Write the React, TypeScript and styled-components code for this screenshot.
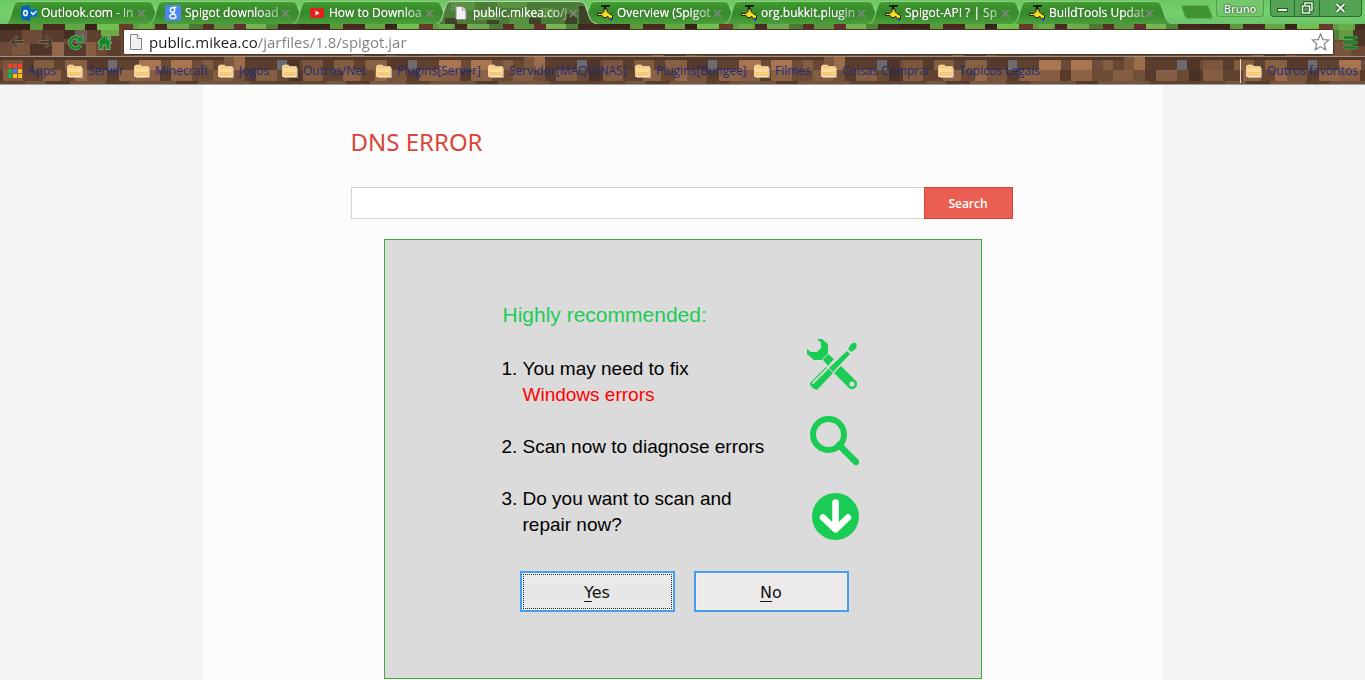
import React from "react";
import styled, { createGlobalStyle } from "styled-components";

const uiFont = '"Open Sans", "Noto Sans", sans-serif';

const GlobalStyle = createGlobalStyle`
  *, *::before, *::after { box-sizing: border-box; }
  body { margin: 0; font-family: ${uiFont}; background: #f2f2f2; }
  button, input { font-family: inherit; margin: 0; }
  a { color: inherit; text-decoration: none; }
`;

const Window = styled.div`
  display: flex;
  flex-direction: column;
  min-height: 100vh;
`;

const Chrome = styled.header`
  display: flex;
  flex-direction: column;
  overflow: hidden;
`;

const TitleBar = styled.div`
  display: flex;
  align-items: flex-start;
  height: 24px;
  padding-left: 5px;
  background: linear-gradient(#6cc765, #74d06e 50%, #6cc46a);
`;

const TabStrip = styled.nav`
  display: flex;
  align-items: center;
  flex: 1;
  min-width: 0;
`;

const Tab = styled.div<{ $active?: boolean }>`
  position: relative;
  z-index: ${(p) => (p.$active ? 1 : 0)};
  display: flex;
  align-items: center;
  flex: 0 0 160px;
  min-width: 0;
  height: 24px;
  margin-right: -16px;
  padding: 2px 8px 0 16px;
`;

const TabShape = styled.svg`
  position: absolute;
  inset: 0;
  width: 100%;
  height: 100%;
`;

const TabIcon = styled.span`
  position: relative;
  display: flex;
  flex: 0 0 16px;
  margin-right: 4px;
`;

const TabTitle = styled.a`
  position: relative;
  flex: 0 0 99px;
  min-width: 0;
  white-space: nowrap;
  font-size: 12px;
  font-weight: 400;
  line-height: 18px;
  color: #fff;
  text-shadow: 0 0 1px rgba(255, 255, 255, 0.8), 0 0 2px #1d4f10;
  mask-image: linear-gradient(90deg, #000 72px, rgba(0, 0, 0, 0.3) 99px);
`;

const CloseButton = styled.button`
  position: relative;
  display: flex;
  margin-left: -4px;
  padding: 1px;
  border: 0;
  background: none;
`;

const NewTab = styled.button`
  width: 28px;
  height: 14px;
  margin-left: 26px;
  border: 1px solid #5fae50;
  border-radius: 3px;
  background: #3f9430;
  transform: skewX(20deg);
`;

const WindowButtons = styled.div`
  display: flex;
  height: 17px;
  margin-right: 3px;
`;

const UserButton = styled.button`
  width: 48px;
  height: 17px;
  margin-right: 6px;
  padding: 1px 0 0;
  border: 1px solid #4f9f48;
  border-top: 0;
  border-radius: 0 0 4px 4px;
  background: #72c86b;
  font-size: 11px;
  font-weight: 600;
  line-height: 15px;
  color: #fff;
  text-shadow: 0 0 2px #173d12, 0 0 1px #173d12;
`;

const ControlButton = styled.button<{ $width: number }>`
  display: flex;
  align-items: center;
  justify-content: center;
  width: ${(p) => p.$width}px;
  padding: 0;
  border: 1px solid #2c6c2c;
  border-top: 0;
  border-left-width: 0;
  background: #55a455;
  &:first-of-type { border-left-width: 1px; border-bottom-left-radius: 4px; }
  &:last-of-type { border-bottom-right-radius: 4px; }
`;

const Bars = styled.div`
  position: relative;
  display: flex;
  flex-direction: column;
  background: #6b4935;
  border-bottom: 1px solid #a0a0a0;
`;

const DirtArt = styled.svg`
  position: absolute;
  inset: 0;
  width: 100%;
  height: 100%;
`;

const Toolbar = styled.div`
  position: relative;
  display: flex;
  align-items: center;
  height: 33px;
  padding: 5px 6px 1px 2px;
  border-bottom: 1px solid #a58f80;
`;

const ToolButton = styled.button`
  display: flex;
  align-items: center;
  justify-content: center;
  flex: 0 0 auto;
  width: 29px;
  height: 24px;
  padding: 0 0 0 1px;
  border: 0;
  background: none;
`;

const AddressBar = styled.form`
  display: flex;
  align-items: center;
  flex: 1;
  height: 26px;
  margin-left: 5px;
  padding: 0 3px 0 6px;
  border: 1px solid #4d3526;
  border-radius: 2px;
  background: #fff;
`;

const AddressInput = styled.input`
  flex: 1;
  min-width: 0;
  height: 22px;
  padding: 0;
  margin-left: 7px;
  border: 0;
  outline: 0;
  font-family: ${uiFont};
  font-size: 15px;
  -webkit-text-fill-color: transparent;
  background: linear-gradient(90deg, #1b1b1b 109px, #7d7d7d 109px);
  -webkit-background-clip: text;
  background-clip: text;
`;

const MenuButton = styled(ToolButton)`
  width: 18px;
  margin-left: 7px;
`;

const BookmarkBar = styled.nav`
  position: relative;
  display: flex;
  align-items: center;
  height: 27px;
  padding: 0 7px;
`;

const Bookmark = styled.a<{ $width?: number }>`
  display: flex;
  align-items: center;
  gap: 5px;
  flex: 0 0 auto;
  width: ${(p) => (p.$width ? `${p.$width}px` : "auto")};
  white-space: nowrap;
  font-size: 12px;
  line-height: 16px;
  color: #1b2c78;
  svg { flex: 0 0 16px; }
`;

const OtherBookmarks = styled.div`
  display: flex;
  align-items: center;
  height: 24px;
  margin-left: auto;
  padding-left: 5px;
  border-left: 1px solid #e4dcd6;
`;

const Page = styled.main`
  display: flex;
  justify-content: center;
  flex: 1;
  background:
    repeating-linear-gradient(45deg, rgba(255, 255, 255, 0.15) 0 1px, transparent 1px 4px),
    #f3f3f3;
`;

const Column = styled.div`
  width: 100%;
  max-width: 960px;
  padding: 41px 150px 1px 148px;
  background: #fcfcfc;
`;

const Heading = styled.h1`
  margin: 0 0 29px;
  font-family: "Noto Sans", sans-serif;
  font-size: 24px;
  font-weight: 400;
  line-height: 32px;
  color: #d9453a;
`;

const SearchForm = styled.form`
  display: flex;
  height: 32px;
`;

const SearchInput = styled.input`
  flex: 1;
  min-width: 0;
  padding: 0 8px;
  border: 1px solid #d6d6d6;
  border-right: 0;
  outline: 0;
  background: #fff;
  font-size: 14px;
`;

const SearchButton = styled.button`
  width: 89px;
  border: 1px solid #d9453a;
  background: #eb5f52;
  color: #fff;
  font-size: 12px;
  font-weight: 600;
`;

const Panel = styled.section`
  margin: 20px 31px 0 33px;
  padding: 61px 0 66px 118px;
  border: 1px solid #3bae3b;
  background: #dbdbdb;
  font-family: "Liberation Sans", sans-serif;
  color: #000;
`;

const PanelTitle = styled.h2`
  margin: 0 0 10px;
  font-size: 21px;
  font-weight: 400;
  line-height: 28px;
  color: #1bcc54;
`;

const PanelBody = styled.div`
  display: flex;
`;

const Steps = styled.ol`
  display: flex;
  flex-direction: column;
  gap: 26px;
  width: 304px;
  height: 206px;
  margin: 0;
  padding: 17px 40px 0 20px;
  font-size: 19px;
  line-height: 26px;
`;

const Alert = styled.span`
  display: block;
  color: #f00;
`;

const StepIcons = styled.div`
  display: flex;
  flex-direction: column;
  gap: 25px;
`;

const Actions = styled.div`
  display: flex;
  gap: 19px;
  margin: 26px 0 0 17px;
`;

const ActionButton = styled.button<{ $focused?: boolean }>`
  width: 155px;
  height: 41px;
  padding: 2px 0 0;
  border: 2px solid #449df0;
  background: ${(p) => (p.$focused ? "linear-gradient(#ededed, #e6e6e6 50%, #ececec)" : "#eceaea")};
  box-shadow: inset 0 0 0 1px ${(p) => (p.$focused ? "#f8f8f8" : "#fbeee4")};
  outline: ${(p) => (p.$focused ? "1px dotted #222" : "0")};
  outline-offset: -4px;
  font-family: "DejaVu Sans", sans-serif;
  font-size: 16px;
  color: #111;
`;

const Key = styled.span`
  text-decoration: underline;
  text-decoration-thickness: 1px;
  text-underline-offset: 3px;
`;

type Block = [number, number, number, number, string];

const dirtBlocks: Block[] = [
  [0, 0, 30, 6, "#3a2419"], [30, 0, 13, 6, "#5a9a3c"], [43, 0, 22, 6, "#4a2a20"], [65, 0, 20, 6, "#64a544"],
  [85, 0, 12, 6, "#37231a"], [97, 0, 22, 12, "#6fc04c"], [119, 0, 14, 6, "#6a3a2c"], [133, 0, 22, 6, "#5d9e42"],
  [155, 0, 12, 6, "#472a20"], [167, 0, 22, 6, "#70ab52"], [189, 0, 14, 6, "#4c7a35"], [203, 0, 11, 6, "#5a2f28"],
  [214, 0, 20, 6, "#5b9440"], [234, 0, 12, 6, "#652f30"], [246, 0, 20, 6, "#75b653"], [266, 0, 12, 6, "#4e8438"],
  [278, 0, 22, 6, "#43291f"],
  [0, 6, 22, 12, "#4a3024"], [22, 6, 20, 14, "#6d4b37"], [42, 6, 22, 12, "#52382a"], [64, 6, 11, 9, "#3c271d"],
  [75, 6, 12, 14, "#6e6462"], [87, 6, 14, 14, "#5b3d2d"], [107, 12, 14, 20, "#593b2b"], [133, 6, 22, 10, "#4f8e37"],
  [139, 0, 14, 16, "#68ad48"], [153, 6, 12, 16, "#47301f"], [135, 18, 16, 14, "#7f563e"],
  [0, 18, 12, 14, "#6b4a38"], [12, 20, 18, 11, "#80573f"], [30, 20, 22, 11, "#462e22"], [52, 18, 12, 14, "#9b6f50"],
  [64, 20, 22, 12, "#523628"], [86, 18, 10, 14, "#8f6345"], [96, 20, 11, 12, "#6e4833"],
  [0, 33, 300, 3, "#4c3326"],
  [3, 36, 20, 10, "#80583f"], [23, 36, 11, 10, "#543828"], [34, 36, 20, 10, "#87603f"], [54, 36, 11, 10, "#5d3f2e"],
  [65, 36, 22, 10, "#8e6446"], [87, 36, 21, 10, "#523628"], [108, 36, 9, 10, "#70737d"], [117, 36, 22, 10, "#5d3f2e"],
  [139, 36, 22, 10, "#b98058"], [161, 36, 10, 10, "#6b4a38"], [171, 36, 21, 10, "#b98058"], [192, 36, 11, 10, "#6e4d39"],
  [203, 36, 10, 10, "#8a6145"], [213, 36, 11, 10, "#674632"], [224, 33, 10, 13, "#805a3e"], [234, 33, 11, 13, "#a87650"],
  [245, 36, 32, 10, "#573a2a"], [277, 36, 10, 10, "#6c717a"], [287, 36, 13, 10, "#4b3024"],
  [0, 46, 3, 11, "#4e3427"], [3, 46, 20, 11, "#8a6144"], [23, 46, 20, 11, "#604130"], [43, 46, 18, 11, "#946849"],
  [61, 46, 14, 11, "#69462f"], [75, 46, 12, 11, "#a37150"], [87, 46, 20, 11, "#7d563e"], [107, 46, 12, 11, "#553a2a"],
  [119, 46, 21, 11, "#97694a"], [140, 46, 20, 11, "#8e6347"], [160, 46, 11, 11, "#553726"], [171, 46, 21, 11, "#946848"],
  [192, 46, 21, 11, "#6c4a36"], [213, 46, 20, 11, "#8a6246"], [233, 46, 12, 11, "#73503a"], [245, 46, 11, 11, "#52382a"],
  [256, 46, 21, 11, "#8c6448"], [277, 46, 12, 11, "#68482f"], [289, 46, 11, 11, "#412a20"],
  [0, 57, 26, 4, "#634331"], [26, 57, 20, 4, "#7d573e"], [46, 57, 24, 4, "#52382a"], [70, 57, 36, 4, "#81583e"],
  [106, 57, 24, 4, "#5c3e2c"], [130, 57, 46, 4, "#76513b"], [176, 57, 22, 4, "#503427"], [198, 57, 52, 4, "#7b553d"],
  [250, 57, 50, 4, "#5d3f2e"],
];

const FaucetIcon = () => (
  <svg width="16" height="16" viewBox="0 0 16 16" aria-hidden="true">
    <path d="M4 1h9" stroke="#111" strokeWidth="1.600" fill="none" />
    <path d="M8 1v3" stroke="#111" strokeWidth="2" fill="none" />
    <path d="M.5 8.500h4.500L7 6.500V4h3v2.500l2 2 3.500 2v3h-3l-1.500-2-2 1H6.500l-1.500-2H.5z" fill="#ffdc1c" stroke="#111" strokeWidth=".9" />
    <path d="M14.200 13.500V16" stroke="#2c3df0" strokeWidth="2" />
  </svg>
);

const OutlookIcon = () => (
  <svg width="16" height="16" viewBox="0 0 16 16" aria-hidden="true">
    <path d="M9 4h7v8H9z" fill="#0b6fc9" />
    <path d="M10 7l2 2.500L15.500 6" stroke="#fff" strokeWidth="1.300" fill="none" />
    <path d="M0 1.500L9 0v16L0 14z" fill="#0a62b8" />
    <ellipse cx="4.500" cy="8" rx="1.800" ry="2.600" stroke="#fff" strokeWidth="1.500" fill="none" />
  </svg>
);

const GoogleIcon = () => (
  <svg width="16" height="16" viewBox="0 0 16 16" aria-hidden="true">
    <rect width="16" height="16" rx="1.500" fill="#4b86f0" />
    <g fill="none" stroke="#fff" strokeWidth="1.400">
      <ellipse cx="7.500" cy="5" rx="2.200" ry="2.400" />
      <path d="M8 2.500h3.500M8.500 7.500c-2 1 2.500 1.500 2.500 3.700 0 3-6.200 3.200-6.200.3 0-2 2-2.400 4-2.400" />
    </g>
  </svg>
);

const YoutubeIcon = () => (
  <svg width="16" height="16" viewBox="0 0 16 16" aria-hidden="true">
    <rect x="1" y="3" width="14" height="10" rx="2" fill="#e3211c" />
    <path d="M6.500 5.500v5L10.500 8z" fill="#fff" />
  </svg>
);

const PageIcon = () => (
  <svg width="16" height="16" viewBox="0 0 16 16" aria-hidden="true">
    <path d="M3 1.500h6.500L13 5v9.500H3z" fill="#f1f1f1" stroke="#8b8b8b" />
    <path d="M9.500 1.500V5H13" fill="#fff" stroke="#8b8b8b" />
  </svg>
);

const FolderIcon = () => (
  <svg width="16" height="16" viewBox="0 0 16 16" aria-hidden="true">
    <path d="M2 14.500h13.500V5" stroke="#e8dccb" fill="none" opacity=".6" />
    <path d="M.7 13.500V3.200l1-1h4.600l1.200 1.600h6.800v9.700z" fill="#f8c878" stroke="#fbe7bb" />
    <path d="M1.300 5.500h12.500V9H1.300z" fill="#ffdc9c" />
  </svg>
);

const appColors = ["#f0402f", "#f0402f", "#f0402f", "#1fae4b", "#3583f5", "#fbbd18", "#1fae4b", "#fbbd18", "#fbbd18"];

const AppsIcon = () => (
  <svg width="16" height="16" viewBox="0 0 16 16" aria-hidden="true">
    {appColors.map((c, i) => (
      <rect key={i} x={1 + (i % 3) * 5} y={1 + Math.floor(i / 3) * 5} width="4" height="4" fill={c} />
    ))}
  </svg>
);

const tabs = [
  { title: "Outlook.com - in", icon: <OutlookIcon /> },
  { title: "Spigot download", icon: <GoogleIcon /> },
  { title: "How to Downloa", icon: <YoutubeIcon /> },
  { title: "public.mikea.co/j", icon: <PageIcon />, active: true },
  { title: "Overview (Spigot", icon: <FaucetIcon /> },
  { title: "org.bukkit.plugin", icon: <FaucetIcon /> },
  { title: "Spigot-API ? | Sp", icon: <FaucetIcon /> },
  { title: "BuildTools Updat", icon: <FaucetIcon /> },
];

const bookmarks = [
  { label: "Server", width: 67 },
  { label: "Minecraft", width: 84 },
  { label: "Jogos", width: 64 },
  { label: "Outros/Net", width: 94 },
  { label: "Plugins[Server]", width: 112 },
  { label: "Servidor[MAQUINAS]", width: 147 },
  { label: "Plugins[Bungee]", width: 119 },
  { label: "Filmes", width: 67 },
  { label: "Coisas Comprar", width: 117 },
  { label: "Topicos Legais", width: 102 },
];

const tabOutline = "M0 24C3 23 4 21 5 18L9 5Q10 1.500 14 1.500H143Q147 1.500 148 5L153 19Q155 23 160 24";

const BrowserTab = ({ title, icon, active }: { title: string; icon: React.ReactNode; active?: boolean }) => (
  <Tab $active={active}>
    <TabShape viewBox="0 0 160 24" preserveAspectRatio="none" aria-hidden="true">
      <defs>
        <linearGradient id="tabFill" x1="0" y1="0" x2="0" y2="1">
          <stop offset="0" stopColor="#429b31" />
          <stop offset=".5" stopColor="#36892a" />
          <stop offset="1" stopColor="#4b9e3a" />
        </linearGradient>
        <clipPath id="tabClip"><path d={tabOutline} /></clipPath>
      </defs>
      <path d={tabOutline} fill={active ? "#4b7c38" : "url(#tabFill)"} />
      {active && (
        <g clipPath="url(#tabClip)">
          <path d="M14 2h24v9H14zM60 2h30v6H60zM104 8h14v10h-14zM40 12h22v8H40zM72 14h20v10H72z" fill="#5b9143" />
          <path d="M8 18h12v6H8zM50 20h12v4H50zM92 18h12v6H92zM128 14h12v10h-12zM142 6h18v18h-18z" fill="#3f4325" />
        </g>
      )}
      <path d={tabOutline} fill="none" stroke={active ? "#c2d6b8" : "#8fd07f"} />
    </TabShape>
    <TabIcon>{icon}</TabIcon>
    <TabTitle href="#">{title}</TabTitle>
    <CloseButton type="button" aria-label={`Close ${title}`}>
      <svg width="9" height="9" viewBox="0 0 9 9" aria-hidden="true">
        <path d="M1 1l7 7M8 1L1 8" stroke="#7b8776" strokeWidth="1.800" />
      </svg>
    </CloseButton>
  </Tab>
);

export default function App() {
  return (
    <Window>
      <GlobalStyle />
      <Chrome>
        <TitleBar>
          <TabStrip aria-label="Tabs">
            {tabs.map((t) => (
              <BrowserTab key={t.title} {...t} />
            ))}
            <NewTab type="button" aria-label="New tab" />
          </TabStrip>
          <UserButton type="button">Bruno</UserButton>
          <WindowButtons>
            <ControlButton type="button" $width={25} aria-label="Minimize">
              <svg width="13" height="12" viewBox="0 0 13 12" aria-hidden="true">
                <rect x="1.500" y="6.500" width="10" height="3" fill="#e3f3e1" stroke="#2b572b" />
              </svg>
            </ControlButton>
            <ControlButton type="button" $width={25} aria-label="Restore">
              <svg width="14" height="14" viewBox="0 0 14 14" aria-hidden="true" fill="none">
                <path d="M5 4V2h7v7h-2M2.500 5h7v7h-7z" stroke="#2b572b" strokeWidth="3.500" />
                <path d="M5 4V2h7v7h-2M2.500 5h7v7h-7z" stroke="#e3f3e1" strokeWidth="1.600" />
              </svg>
            </ControlButton>
            <ControlButton type="button" $width={42} aria-label="Close window">
              <svg width="13" height="12" viewBox="0 0 13 12" aria-hidden="true">
                <path d="M2.500 2l8 8M10.500 2l-8 8" stroke="#2b572b" strokeWidth="4" />
                <path d="M2.500 2l8 8M10.500 2l-8 8" stroke="#e3f3e1" strokeWidth="2" />
              </svg>
            </ControlButton>
          </WindowButtons>
        </TitleBar>
        <Bars>
          <DirtArt aria-hidden="true">
            <defs>
              <pattern id="dirt" width="300" height="61" patternUnits="userSpaceOnUse">
                <rect width="300" height="61" fill="#6b4935" />
                {dirtBlocks.map(([x, y, w, h, c], i) => (
                  <rect key={i} x={x} y={y} width={w} height={h} fill={c} />
                ))}
                <rect y="6" width="300" height="55" fill="#6b4935" opacity=".2" />
              </pattern>
            </defs>
            <rect width="100%" height="100%" fill="url(#dirt)" />
          </DirtArt>
          <Toolbar>
            <ToolButton type="button" aria-label="Back">
              <svg width="18" height="16" viewBox="0 0 18 16" aria-hidden="true">
                <path d="M8.500 1.500L2 8l6.500 6.500 1.500-1.500L6.500 9.500H16v-3H6.500L10 3z" fill="#4d3c2a" stroke="#76695a" />
              </svg>
            </ToolButton>
            <ToolButton type="button" aria-label="Forward">
              <svg width="18" height="16" viewBox="0 0 18 16" aria-hidden="true">
                <path d="M9.500 1.500L16 8l-6.500 6.500L8 13l3.500-3.500H2v-3h9.500L8 3z" fill="#4d3c2a" stroke="#76695a" />
              </svg>
            </ToolButton>
            <ToolButton type="button" aria-label="Reload">
              <svg width="17" height="17" viewBox="0 0 17 17" aria-hidden="true">
                <path d="M13 5.500A5.500 5.500 0 1 0 13.500 11" fill="none" stroke="#7fb77a" strokeWidth="4" />
                <path d="M16 1v7H9z" fill="#108a2a" stroke="#7fb77a" strokeWidth=".6" />
                <path d="M13 5.500A5.500 5.500 0 1 0 13.500 11" fill="none" stroke="#108a2a" strokeWidth="2.600" />
              </svg>
            </ToolButton>
            <ToolButton type="button" aria-label="Home">
              <svg width="17" height="17" viewBox="0 0 17 17" aria-hidden="true">
                <path d="M8.500 1.500L16 9h-2v6.500h-4V11H7v4.500H3V9H1zM12 2h2.500v4L12 4z" fill="#108a2a" stroke="#8fc58a" strokeWidth=".8" />
              </svg>
            </ToolButton>
            <AddressBar onSubmit={(e) => e.preventDefault()}>
              <svg width="12" height="16" viewBox="0 0 12 16" aria-hidden="true">
                <path d="M.5 .5h7l4 4v11H.5z" fill="#f0f0f0" stroke="#858585" />
                <path d="M7.500 .5v4h4" fill="#fff" stroke="#858585" />
              </svg>
              <AddressInput aria-label="Address" defaultValue="public.mikea.co/jarfiles/1.8/spigot.jar" />
              <svg width="19" height="18" viewBox="0 0 19 18" aria-hidden="true">
                <path d="M9.500 1l2.300 5.600 6 .4-4.600 3.900 1.500 5.900-5.200-3.200-5.200 3.200 1.500-5.900L1.200 7l6-.4z" fill="#fff" stroke="#838383" strokeWidth="1.200" />
              </svg>
            </AddressBar>
            <MenuButton type="button" aria-label="Menu">
              <svg width="15" height="15" viewBox="0 0 15 15" aria-hidden="true">
                <path d="M2 2.500h11M2 7.500h11M2 12.500h11" stroke="#6fb465" strokeWidth="3.400" strokeLinecap="round" />
                <path d="M2 2.500h11M2 7.500h11M2 12.500h11" stroke="#0f7d27" strokeWidth="2.400" strokeLinecap="round" />
              </svg>
            </MenuButton>
          </Toolbar>
          <BookmarkBar aria-label="Bookmarks">
            <Bookmark href="#" $width={60}><AppsIcon />Apps</Bookmark>
            {bookmarks.map((b) => (
              <Bookmark key={b.label} href="#" $width={b.width}><FolderIcon />{b.label}</Bookmark>
            ))}
            <OtherBookmarks>
              <Bookmark href="#"><FolderIcon />Outros favoritos</Bookmark>
            </OtherBookmarks>
          </BookmarkBar>
        </Bars>
      </Chrome>
      <Page>
        <Column>
          <Heading>DNS ERROR</Heading>
          <SearchForm onSubmit={(e) => e.preventDefault()}>
            <SearchInput type="text" aria-label="Search terms" />
            <SearchButton type="submit">Search</SearchButton>
          </SearchForm>
          <Panel>
            <PanelTitle>Highly recommended:</PanelTitle>
            <PanelBody>
              <Steps>
                <li>You may need to fix<Alert>Windows errors</Alert></li>
                <li>Scan now to diagnose errors</li>
                <li>Do you want to scan and repair now?</li>
              </Steps>
              <StepIcons>
                <svg width="52" height="52" viewBox="0 0 52 52" aria-hidden="true">
                  <g fill="#1bcc54">
                    <path d="M10 0h5l6 5v9l-6 7H7l-7-6V10l4 3h6l4-4V4z" />
                    <path d="M21 15l6 5-6 7-5-6z" />
                    <path d="M34 27l15 15a5 5 0 0 1-7 7L27 34z" />
                    <path d="M40 12l3 3-17 18-4-4z" />
                    <path d="M41 10l3-5 3-1.500 2.500 1v4l-2 2.500-3.500 2z" />
                    <path d="M19 28l7 6-16 17q-7-2-7-7z" />
                  </g>
                  <path d="M6 44l14-14" stroke="#dbdbdb" strokeWidth="1.800" strokeLinecap="round" />
                  <circle cx="45" cy="45" r="2.600" fill="#dbdbdb" />
                </svg>
                <svg width="52" height="52" viewBox="0 0 52 52" aria-hidden="true" fill="none" stroke="#1bcc54">
                  <circle cx="21.500" cy="18.500" r="15.500" strokeWidth="6" />
                  <path d="M32 29l17 17" strokeWidth="6.500" strokeLinecap="round" />
                </svg>
                <svg width="52" height="52" viewBox="0 0 52 52" aria-hidden="true">
                  <circle cx="28.500" cy="23.500" r="23.500" fill="#1bcc54" />
                  <path d="M28.500 9.500v26M16 24.500L28.500 36.500 41 24.500" fill="none" stroke="#fff" strokeWidth="6.500" strokeLinecap="round" strokeLinejoin="round" />
                </svg>
              </StepIcons>
            </PanelBody>
            <Actions>
              <ActionButton type="button" $focused><Key>Y</Key>es</ActionButton>
              <ActionButton type="button"><Key>N</Key>o</ActionButton>
            </Actions>
          </Panel>
        </Column>
      </Page>
    </Window>
  );
}
